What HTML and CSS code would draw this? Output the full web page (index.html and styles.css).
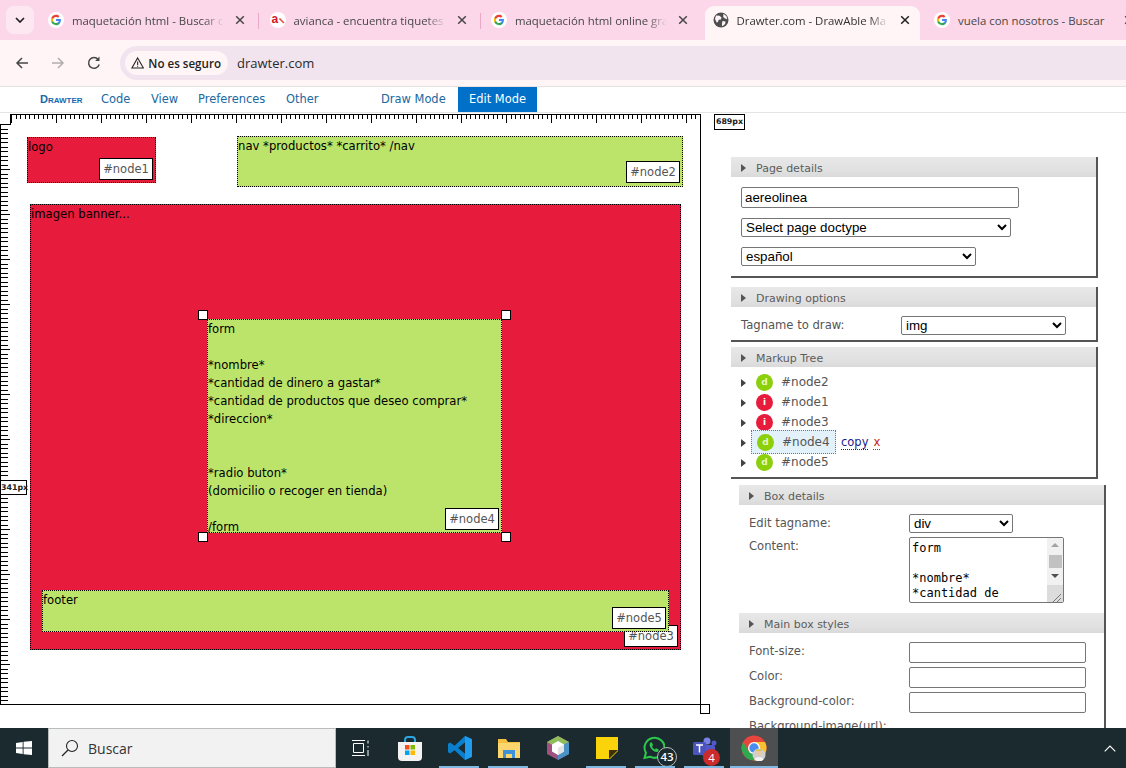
FILE: index.html
```html
<!DOCTYPE html>
<html lang="es">
<head>
<meta charset="utf-8">
<title>Drawter.com - DrawAble Markup</title>
<link rel="stylesheet" href="styles.css">
</head>
<body>
<svg class="defs" width="0" height="0">
  <defs>
    <symbol id="g" viewBox="0 0 24 24">
      <circle cx="12" cy="12" r="12" fill="#fff"/>
      <g transform="translate(3.6 3.6) scale(.7)">
        <path fill="#4285F4" d="M22.56 12.25c0-.78-.07-1.53-.2-2.25H12v4.26h5.92c-.26 1.37-1.04 2.53-2.21 3.31v2.77h3.57c2.08-1.92 3.28-4.74 3.28-8.09z"/>
        <path fill="#34A853" d="M12 23c2.97 0 5.46-.98 7.28-2.66l-3.57-2.77c-.98.66-2.23 1.06-3.71 1.06-2.86 0-5.29-1.93-6.16-4.53H2.18v2.84C3.99 20.53 7.7 23 12 23z"/>
        <path fill="#FBBC05" d="M5.84 14.09c-.22-.66-.35-1.36-.35-2.09s.13-1.43.35-2.09V7.07H2.18C1.43 8.55 1 10.22 1 12s.43 3.45 1.18 4.93l3.66-2.84z"/>
        <path fill="#EA4335" d="M12 5.38c1.62 0 3.06.56 4.21 1.64l3.15-3.15C17.45 2.09 14.97 1 12 1 7.7 1 3.99 3.47 2.18 7.07l3.66 2.84c.87-2.6 3.3-4.53 6.16-4.53z"/>
      </g>
    </symbol>
    <symbol id="close" viewBox="0 0 10 10">
      <path d="M1.2 1.2l7.6 7.6M8.8 1.2l-7.6 7.6" stroke="currentColor" stroke-width="1.5" fill="none"/>
    </symbol>
    <pattern id="tickx" width="45" height="10" patternUnits="userSpaceOnUse">
      <path d="M.5 0v9M5.5 0v5M9.5 0v5M14.5 0v5M18.5 0v5M23.5 0v5M27.5 0v5M32.5 0v5M36.5 0v5M41.5 0v5" stroke="#000" stroke-width="1" fill="none"/>
    </pattern>
    <pattern id="ticky" width="10" height="45" patternUnits="userSpaceOnUse">
      <path d="M0 .5h10M0 5.5h7M0 9.5h7M0 14.5h7M0 18.5h7M0 23.5h7M0 27.5h7M0 32.5h7M0 36.5h7M0 41.5h7" stroke="#000" stroke-width="1" fill="none"/>
    </pattern>
  </defs>
</svg>

<header class="tabstrip">
  <button class="tabs-menu" type="button" aria-label="Lista de pestañas">
    <svg width="10" height="6" viewBox="0 0 10 6"><path d="M1 1l4 4 4-4" stroke="#222" stroke-width="1.7" fill="none"/></svg>
  </button>
  <div class="tab">
    <svg class="favicon"><use href="#g"/></svg>
    <span class="tab-title">maquetación html - Buscar c</span>
    <svg class="tab-close"><use href="#close"/></svg>
  </div>
  <div class="tab">
    <span class="favicon fav-av">a<svg width="6" height="6" viewBox="0 0 6 6"><path d="M.5 .5L5 5" stroke="#e2574e" stroke-width="1.600"/></svg></span>
    <span class="tab-title">avianca - encuentra tiquetes</span>
    <svg class="tab-close"><use href="#close"/></svg>
  </div>
  <div class="tab">
    <svg class="favicon"><use href="#g"/></svg>
    <span class="tab-title">maquetación html online gra</span>
    <svg class="tab-close"><use href="#close"/></svg>
  </div>
  <div class="tab tab-active">
    <svg class="favicon" viewBox="0 0 16 16"><circle cx="8" cy="8" r="7.500" fill="#4e4e50"/><path d="M3 3.500l3.500.2 2 1.800-.6 2-2.300.3-.6 2.200-1.300.6L2 7zM10.500 1.800l3 2.400.8 3-2.300-.6-1.800-1.500zM9.500 9l3 .6-.4 2.500-2.400 2-.8-.4.2-2.500z" fill="#fff5f6"/></svg>
    <span class="tab-title">Drawter.com - DrawAble Ma</span>
    <svg class="tab-close"><use href="#close"/></svg>
  </div>
  <div class="tab tab-last">
    <svg class="favicon"><use href="#g"/></svg>
    <span class="tab-title">vuela con nosotros - Buscar</span>
    <svg class="tab-close"><use href="#close"/></svg>
  </div>
</header>

<div class="toolbar">
  <svg class="tool" viewBox="0 0 16 16"><path d="M14 8H3M8 3L3 8l5 5" stroke="#474747" stroke-width="1.500" fill="none"/></svg>
  <svg class="tool" viewBox="0 0 16 16"><path d="M2 8h11M8 3l5 5-5 5" stroke="#b3adb0" stroke-width="1.500" fill="none"/></svg>
  <svg class="tool" viewBox="0 0 16 16"><path d="M13.200 9.500A5.400 5.400 0 1 1 12.200 4.500" stroke="#474747" stroke-width="1.500" fill="none"/><path d="M13.500 1.500v4.400H9.100z" fill="#474747"/></svg>
  <div class="omnibox">
    <div class="chip">
      <svg width="15" height="14" viewBox="0 0 15 14"><path d="M7.500 1.300L14 12.700H1zM7.500 5.200v4M7.500 10v1.300" stroke="#222" stroke-width="1.200" fill="none"/></svg>
      <span>No es seguro</span>
    </div>
    <span class="url">drawter.com</span>
  </div>
</div>

<nav class="appnav">
  <span class="brand">Drawter</span>
  <a class="nav-link">Code</a>
  <a class="nav-link">View</a>
  <a class="nav-link">Preferences</a>
  <a class="nav-link">Other</a>
  <a class="mode">Draw Mode</a>
  <a class="mode mode-on">Edit Mode</a>
</nav>

<main class="workspace">
  <section class="stage">
    <svg class="ruler-top" width="690" height="10"><rect width="690" height="10" fill="url(#tickx)"/></svg>
    <svg class="ruler-left" width="10" height="581"><rect width="10" height="581" fill="url(#ticky)"/></svg>
    <div class="sheet"></div>
    <span class="handle handle-sheet"></span>
    <span class="size size-w">689px</span>
    <span class="size size-h">341px</span>

    <div class="node red n1">logo<span class="tag">#node1</span></div>
    <div class="node green n2">nav *productos* *carrito* /nav<span class="tag">#node2</span></div>
    <div class="node red n3">imagen banner...<span class="tag">#node3</span></div>
    <div class="node green n4">form<br><br>*nombre*<br>*cantidad de dinero a gastar*<br>*cantidad de productos que deseo comprar*<br>*direccion*<br><br><br>*radio buton*<br>(domicilio o recoger en tienda)<br><br>/form<span class="tag">#node4</span></div>
    <div class="node green n5">footer<span class="tag">#node5</span></div>
    <span class="handle h-tl"></span><span class="handle h-tr"></span><span class="handle h-bl"></span><span class="handle h-br"></span>
  </section>

  <aside class="side">
    <section class="panel p-page">
      <h2 class="panel-head">Page details</h2>
      <div class="page-fields">
        <input class="ctl in-title" value="aereolinea">
        <select class="ctl sel-doctype"><option>Select page doctype</option></select>
        <select class="ctl sel-lang"><option>español</option></select>
      </div>
    </section>
    <section class="panel p-draw">
      <h2 class="panel-head">Drawing options</h2>
      <div class="row row-draw"><label>Tagname to draw:</label><select class="ctl sel-tag"><option>img</option></select></div>
    </section>
    <section class="panel p-tree">
      <h2 class="panel-head">Markup Tree</h2>
      <ul class="tree">
        <li class="tree-row"><span class="dot dot-d">d</span>#node2</li>
        <li class="tree-row"><span class="dot dot-i">i</span>#node1</li>
        <li class="tree-row"><span class="dot dot-i">i</span>#node3</li>
        <li class="tree-row"><span class="tree-sel"><span class="dot dot-d">d</span>#node4</span><a class="act act-copy">copy</a><a class="act act-x">x</a></li>
        <li class="tree-row"><span class="dot dot-d">d</span>#node5</li>
      </ul>
    </section>
    <section class="panel p-box">
      <h2 class="panel-head">Box details</h2>
      <div class="row row-edit"><label>Edit tagname:</label><select class="ctl sel-edit"><option>div</option></select></div>
      <div class="row row-content">
        <label>Content:</label>
        <div class="ta-wrap">
          <div class="ta-text">form<br><br>*nombre*<br>*cantidad de</div>
          <div class="ta-bar">
            <svg width="16" height="66" viewBox="0 0 16 66"><rect width="16" height="66" fill="#f1f1f1"/><path d="M8 5l4 4H4z" fill="#a3a3a3"/><rect x="2" y="17" width="13" height="13" fill="#c1c1c1"/><path d="M4 36h8l-4 4z" fill="#505050"/><rect y="47" width="16" height="19" fill="#dcdcdc"/><path d="M14 56l-8 8M14 60l-4 4" stroke="#777" stroke-width="1"/></svg>
          </div>
        </div>
      </div>
      <h2 class="panel-head">Main box styles</h2>
      <div class="styles">
        <div class="row row-style"><label>Font-size:</label><input class="ctl in-style"></div>
        <div class="row row-style"><label>Color:</label><input class="ctl in-style"></div>
        <div class="row row-style"><label>Background-color:</label><input class="ctl in-style"></div>
        <div class="row row-style"><label>Background-image(url):</label></div>
      </div>
    </section>
  </aside>
</main>

<footer class="taskbar">
  <div class="start"><svg width="16" height="16" viewBox="0 0 18 16"><path d="M0 2.300L7.500 1.200V7.500H0zM8.500 1L18 0V7.500H8.500zM0 8.500H7.500V14.800L0 13.700zM8.500 8.500H18V16L8.500 15z" fill="#fff"/></svg></div>
  <div class="search">
    <svg width="18" height="18" viewBox="0 0 18 18"><circle cx="11" cy="7" r="5.500" stroke="#222" stroke-width="1.100" fill="none"/><path d="M7 11l-6 6" stroke="#222" stroke-width="1.200"/></svg>
    <span>Buscar</span>
  </div>
  <div class="tb-icons">
    <div class="tb-item w-task"><svg width="17" height="16" viewBox="0 0 17 16"><path d="M0 .5h13M0 15.500h13M1.500 3.500h10v9h-10zM16 .5v3M16 6v1.500M16 10v6" stroke="#fff" stroke-width="1" fill="none"/></svg></div>
    <div class="tb-item w-store"><svg width="24" height="25" viewBox="0 0 24 25"><path d="M7 6V4a3 3 0 0 1 3-3h4a3 3 0 0 1 3 3v2" stroke="#2ba6e0" stroke-width="2" fill="none"/><path d="M0 6h24v15a4 4 0 0 1-4 4H4a4 4 0 0 1-4-4z" fill="#f4f3f1"/><rect x="7" y="9" width="4.500" height="4.500" fill="#f25022"/><rect x="12.500" y="9" width="4.500" height="4.500" fill="#7fba00"/><rect x="7" y="14.500" width="4.500" height="4.500" fill="#00a4ef"/><rect x="12.500" y="14.500" width="4.500" height="4.500" fill="#ffb900"/></svg></div>
    <div class="tb-item ul"><svg width="24" height="24" viewBox="0 0 24 24"><path d="M17 0l7 3.300v17.400L17 24 6.500 14.200 2.200 17.500 0 16.200V7.800l2.200-1.300 4.300 3.300zM17 6.500L10.400 12 17 17.500z" fill="#0b7fcc"/><path d="M17 0l7 3.300v17.400L17 24z" fill="#1f9cf0"/><path d="M17 6.500L10.400 12 17 17.500z" fill="#1a2a2e"/></svg></div>
    <div class="tb-item ul"><svg width="22" height="20" viewBox="0 0 22 20"><path d="M0 1h8l2 3h12v16H0z" fill="#f4c042"/><path d="M0 5h22v15H0z" fill="#fbd66f"/><path d="M5 12h12v8h-3v-4H8v4H5z" fill="#3d91d8"/></svg></div>
    <div class="tb-item"><svg width="22" height="24" viewBox="0 0 22 24"><path d="M11 0l11 6v12l-11 6L0 18V6z" fill="#a0527f"/><path d="M11 0l11 6-11 6L0 6z" fill="#8fbd5b"/><path d="M11 12l11-6v12l-11 6z" fill="#4a93c9"/><path d="M11 5l6 3.500v7L11 19l-6-3.500v-7z" fill="#fff"/><path d="M11 12l6-3.500v7L11 19z" fill="#e3e3e3"/></svg></div>
    <div class="tb-item ul"><svg width="22" height="22" viewBox="0 0 22 22"><path d="M0 0h22v14l-8 8H0z" fill="#fbd30a"/><path d="M22 13l-9 9v-9z" fill="#3b3008"/></svg></div>
    <div class="tb-item ul">
      <svg class="wa-icon" width="22" height="24" viewBox="0 0 22 24"><path d="M1.500 22l1.400-5.200A10 10 0 1 1 7 20.700z" stroke="#2cc84d" stroke-width="2" fill="none"/><path d="M7.500 6.500c-1.500 1.500-1 4 1 6.500s5 3.800 6.800 2.500l.4-2-2.700-1.300-1 1.200c-1.200-.5-2.500-1.800-3-3l1-1.200-1-2.700z" fill="#2cc84d"/></svg>
      <span class="badge badge-wa">43</span>
    </div>
    <div class="tb-item ul">
      <svg width="24" height="22" viewBox="0 0 24 22"><circle cx="14" cy="4" r="3.500" fill="#7b83eb"/><circle cx="21" cy="6" r="2.500" fill="#5059c9"/><rect x="9" y="8" width="13" height="11" rx="2" fill="#5059c9"/><rect x="0" y="5" width="13" height="13" rx="1.500" fill="#4b53bc"/><path d="M3 8h7M6.500 8v7.500" stroke="#fff" stroke-width="1.500"/></svg>
      <span class="badge badge-teams">4</span>
    </div>
    <div class="tb-item active ul">
      <svg width="26" height="26" viewBox="0 0 26 26"><circle cx="13" cy="13" r="12.500" fill="#e8453c"/><path d="M2.200 6.800A12.500 12.500 0 0 0 13 25.500l5.500-9.500h-11z" fill="#2fa84f"/><path d="M24 7H13l5.500 9-5.500 9.500A12.500 12.500 0 0 0 24 7z" fill="#f9c02f"/><circle cx="13" cy="13" r="6" fill="#fff"/><circle cx="13" cy="13" r="4.700" fill="#4a8df0"/><circle cx="18" cy="20" r="6.500" fill="#cfd0cf"/><circle cx="18" cy="17.800" r="2.700" fill="#e9c9a5"/><path d="M15 16h6v-1.500h-6z" fill="#d6c24a"/><path d="M13.500 24c.8-2.500 8-2.500 9 0l-2 2h-5z" fill="#f4f4f4"/></svg>
    </div>
  </div>
  <svg class="tray-caret" width="12" height="7" viewBox="0 0 12 7"><path d="M.7 6.300L6 1l5.300 5.300" stroke="#fff" stroke-width="1.100" fill="none"/></svg>
</footer>
</body>
</html>
```

FILE: styles.css
```css
* { box-sizing: border-box; }
html, body { margin: 0; height: 100%; }
body {
  width: 1126px;
  height: 768px;
  overflow: hidden;
  display: flex;
  flex-direction: column;
  background: #fff;
  font-family: "DejaVu Sans", sans-serif;
  font-size: 11.65px;
  color: #000;
}
.defs { position: absolute; }

/* browser tabs */
.tabstrip {
  flex: 0 0 40px;
  height: 40px;
  display: flex;
  align-items: stretch;
  padding: 6px 0 0 6px;
  background: #fbd7e9;
  overflow: hidden;
  font-family: "Open Sans", sans-serif;
  font-size: 11.4px;
  color: #474747;
}
.tabs-menu {
  flex: none;
  width: 28px;
  height: 28px;
  margin-right: 6px;
  border: 0;
  padding: 0;
  border-radius: 8px;
  background: #fde8f2;
  display: flex;
  align-items: center;
  justify-content: center;
}
.tab {
  position: relative;
  flex: 0 0 215px;
  width: 215px;
  height: 34px;
  margin-right: 6.5px;
  padding: 0 7px 6px 8px;
  display: flex;
  align-items: center;
  border-radius: 9px 9px 0 0;
}
.tab::after {
  content: "";
  position: absolute;
  right: -4px;
  top: 7px;
  width: 1px;
  height: 16px;
  background: #e9a9c9;
}
.tab:nth-of-type(3)::after,
.tab:nth-of-type(4)::after,
.tab-last::after { display: none; }
.tab-active { background: #fff5f6; color: #333; }
.tab-last { padding-right: 4px; }
.favicon { width: 16px; height: 16px; flex: none; margin-right: 8px; }
.fav-av {
  position: relative;
  display: block;
  border-radius: 50%;
  background: #fff;
  color: #d8141f;
  font-family: "Liberation Sans", sans-serif;
  font-size: 12px;
  font-weight: 700;
  line-height: 14px;
  padding-left: 2px;
}
.fav-av svg { position: absolute; left: 9px; top: 6px; }
.tab-title {
  flex: 1;
  min-width: 0;
  white-space: nowrap;
  -webkit-mask-image: linear-gradient(to right, #000 132px, transparent 152px);
  mask-image: linear-gradient(to right, #000 132px, transparent 152px);
}
.tab-close { width: 10px; height: 10px; flex: none; margin: 0 3px; color: #474747; }
.tab-active .tab-close { color: #222; }
.tab-last .tab-title { -webkit-mask-image: none; mask-image: none; }

/* browser toolbar */
.toolbar {
  flex: 0 0 47px;
  height: 47px;
  display: flex;
  align-items: flex-start;
  padding: 6px 0 0 14px;
  background: #fff5f6;
  border-bottom: 1px solid #e6e2e4;
}
.tool { width: 16px; height: 16px; margin: 9px 20px 0 0; flex: none; }
.tool:nth-of-type(3) { margin-right: 18px; }
.omnibox {
  flex: 1;
  height: 34px;
  display: flex;
  align-items: center;
  padding-left: 5px;
  border-radius: 17px 0 0 17px;
  background: #f1e4ef;
  font-family: "Open Sans", sans-serif;
}
.chip {
  display: flex;
  align-items: center;
  gap: 4px;
  height: 24px;
  padding: 0 7px 0 6px;
  width: 103px;
  border-radius: 12px;
  background: #fff5f6;
  font-size: 11.6px;
  font-weight: 600;
  color: #222;
  white-space: nowrap;
}
.url { margin-left: 9px; font-size: 13px; color: #2a2a2a; }

/* app menu */
.appnav {
  flex: 0 0 26px;
  height: 26px;
  display: flex;
  align-items: flex-start;
  padding-left: 40px;
  border-bottom: 1px solid #e4e4e4;
  color: #20689f;
  font-size: 11.45px;
}
.brand {
  line-height: 25px;
  width: 61px;
  font-weight: 700;
  font-size: 11px;
  font-variant: small-caps;
  font-family: "Liberation Sans", sans-serif;
  color: #1769ae;
}
.nav-link { line-height: 25px; }
.nav-link:nth-of-type(1) { width: 50px; }
.nav-link:nth-of-type(2) { width: 47px; }
.nav-link:nth-of-type(3) { width: 88px; }
.nav-link:nth-of-type(4) { width: 95px; }
.mode { height: 25px; line-height: 25px; width: 77px; }
.mode-on {
  width: 79px;
  text-align: center;
  color: #fff;
  background: #0070c9;
}

/* workspace */
.workspace {
  flex: 1;
  min-height: 0;
  display: flex;
  overflow: hidden;
}
.stage {
  position: relative;
  flex: 0 0 731px;
}
.ruler-top { position: absolute; left: 10px; top: 1px; border-left: 1px solid #000; }
.ruler-left { position: absolute; left: 0; top: 11px; border-left: 1px solid #000; }
.sheet {
  position: absolute;
  left: 0;
  top: 1px;
  width: 701px;
  height: 591px;
  border-right: 1px solid #000;
  border-bottom: 1px solid #000;
  pointer-events: none;
}
.sheet::before {
  content: "";
  position: absolute;
  left: 10px;
  top: 0;
  width: 690px;
  height: 1px;
  background: #000;
}
.sheet::after {
  content: "";
  position: absolute;
  left: 0;
  top: 10px;
  width: 11px;
  height: 1px;
  background: #000;
}
.handle {
  position: absolute;
  width: 10px;
  height: 10px;
  background: #fff;
  border: 1px solid #000;
}
.handle-sheet { left: 700px; top: 591px; }
.h-tl { left: 198px; top: 197px; }
.h-tr { left: 501px; top: 197px; }
.h-bl { left: 198px; top: 419px; }
.h-br { left: 501px; top: 419px; }
.size {
  position: absolute;
  background: #fff;
  border: 1px solid #000;
  font-size: 7.9px;
  font-weight: 700;
  text-align: center;
  color: #222;
}
.size-w { left: 714px; top: 1px; width: 31px; height: 16px; line-height: 14px; }
.size-h { left: 0; top: 367px; width: 27px; height: 15px; line-height: 13px; }

.node {
  position: absolute;
  border: 1px dotted #000;
  line-height: 18px;
  color: #000;
  white-space: nowrap;
}
.red { background: #e71b3b; }
.green { background: #bce46a; }
.n1 { left: 27px; top: 24px; width: 129px; height: 46px; }
.n2 { left: 237px; top: 23px; width: 446px; height: 51px; }
.n3 { left: 30px; top: 91px; width: 651px; height: 446px; }
.n4 { left: 207px; top: 206px; width: 295px; height: 214px; }
.n5 { left: 42px; top: 477px; width: 627px; height: 42px; }
.tag {
  position: absolute;
  right: 2px;
  bottom: 2px;
  width: 54px;
  height: 22px;
  line-height: 20px;
  text-align: center;
  background: #fff;
  border: 1px solid #000;
  color: #555;
  font-size: 11.5px;
}
.n2 .tag { bottom: 3px; }

/* side panels */
.side {
  flex: 1;
  min-width: 0;
  padding-top: 44px;
  color: #555;
  font-size: 11.6px;
}
.panel {
  width: 367px;
  background: #fff;
  border-right: 2px solid #555;
  border-bottom: 2px solid #555;
}
.p-page { height: 121px; margin-bottom: 9px; }
.p-draw { height: 55px; margin-bottom: 5px; }
.p-tree { height: 132px; margin-bottom: 6px; }
.p-box { margin-left: 8px; }
.panel-head {
  position: relative;
  margin: 0;
  height: 20px;
  line-height: 23px;
  padding-left: 25px;
  font-size: 11px;
  font-weight: 400;
  color: #5c5c5c;
  background: linear-gradient(#e8e8e8, #e0e0e0 70%, #dadada);
}
.panel-head::before {
  content: "";
  position: absolute;
  left: 10px;
  top: 7px;
  border-left: 5px solid #555;
  border-top: 4px solid transparent;
  border-bottom: 4px solid transparent;
}
.ctl {
  display: block;
  height: 21px;
  padding: 0 3px;
  margin: 0;
  background: #fff;
  border: 1px solid #767676;
  border-radius: 2px;
  font-family: "Liberation Sans", sans-serif;
  font-size: 13.33px;
  color: #000;
}
select.ctl { height: 19px; padding: 0; }
.page-fields { padding: 10px 0 0 10px; }
.in-title { width: 278px; }
.sel-doctype { width: 270px; margin-top: 10px; }
.sel-lang { width: 235px; margin-top: 10px; }
.row { display: flex; align-items: flex-start; }
.row label { line-height: 18px; }
.row-draw { padding: 9px 0 0 10px; }
.row-draw label { width: 160px; }
.sel-tag { width: 165px; }
.tree { list-style: none; margin: 0; padding: 5px 0 0; font-size: 12px; color: #555; }
.tree-row {
  position: relative;
  height: 20px;
  display: flex;
  align-items: center;
  padding-left: 25px;
}
.tree-row::before {
  content: "";
  position: absolute;
  left: 10px;
  top: 7px;
  border-left: 5px solid #444;
  border-top: 4px solid transparent;
  border-bottom: 4px solid transparent;
}
.dot {
  width: 17px;
  height: 17px;
  margin-right: 8px;
  border-radius: 50%;
  color: #fff;
  font-size: 9px;
  font-weight: 700;
  line-height: 17px;
  text-align: center;
}
.dot-d { background: #8ccf0b; color: #e8f7c0; }
.dot-i { background: #e71b3b; }
.tree-sel {
  display: flex;
  align-items: center;
  height: 24px;
  width: 85px;
  margin: 0 5px 0 -5px;
  padding-left: 5px;
  border: 1px dotted #2a8fb5;
  background: #e3f1fa;
}
.act { font-size: 11.500px; }
.act-copy { color: #1a1a8c; border-bottom: 1px dotted #1a1a8c; margin-right: 5px; }
.act-x { color: #c41a1a; border-bottom: 1px dotted #c41a1a; }
.row-edit { padding: 9px 0 0 10px; height: 32px; }
.row-edit label { width: 160px; }
.sel-edit { width: 104px; }
.row-content { padding-left: 10px; height: 76px; }
.row-content label { width: 160px; }
.ta-wrap {
  position: relative;
  width: 155px;
  height: 66px;
  border: 1px solid #767676;
  border-radius: 2px;
  overflow: hidden;
}
.ta-text {
  padding: 3px 0 0 2px;
  font-family: "DejaVu Sans Mono", monospace;
  font-size: 12px;
  line-height: 15px;
  color: #000;
}
.ta-bar { position: absolute; right: 0; top: 0; width: 16px; height: 64px; overflow: hidden; }
.styles { padding: 9px 0 0 10px; }
.row-style { height: 25px; }
.row-style label { width: 160px; line-height: 18px; }
.in-style { width: 177px; }

/* taskbar */
.taskbar {
  position: relative;
  flex: 0 0 40px;
  height: 40px;
  display: flex;
  align-items: stretch;
  background: #1a2a2e;
  z-index: 2;
}
.start { width: 48px; display: flex; align-items: center; justify-content: center; }
.search {
  width: 288px;
  display: flex;
  align-items: center;
  gap: 9px;
  padding-left: 12px;
  background: #f2f2f2;
  border: 1px solid #b9bcbd;
  font-family: "Open Sans", sans-serif;
  font-size: 14px;
  color: #333;
}
.tb-icons { display: flex; }
.tb-item {
  position: relative;
  flex: none;
  width: 49px;
  height: 40px;
  display: flex;
  align-items: center;
  justify-content: center;
}
.ul::after {
  content: "";
  position: absolute;
  left: 4px;
  right: 5px;
  bottom: 0;
  height: 2px;
  background: #7fb8e3;
}
.w-task { width: 49px; }
.w-store { width: 50px; }
.wa-icon { margin-right: 4px; }
.active { background: #4d4f50; width: 48px; margin-left: 1px; }
.active::after { left: 0; right: 0; }
.badge {
  position: absolute;
  font-family: "Open Sans", sans-serif;
  color: #fff;
  text-align: center;
  border-radius: 50%;
}
.badge-wa {
  right: 3px;
  top: 19px;
  width: 20px;
  height: 20px;
  line-height: 18px;
  font-size: 11.500px;
  font-weight: 600;
  background: #1a2a2e;
  border: 1px solid #bbb;
}
.badge-teams {
  right: 9px;
  top: 21px;
  width: 17px;
  height: 17px;
  line-height: 17px;
  font-size: 11.500px;
  background: #cc2b2b;
}
.tray-caret { position: absolute; left: 1104px; top: 17px; }
```
